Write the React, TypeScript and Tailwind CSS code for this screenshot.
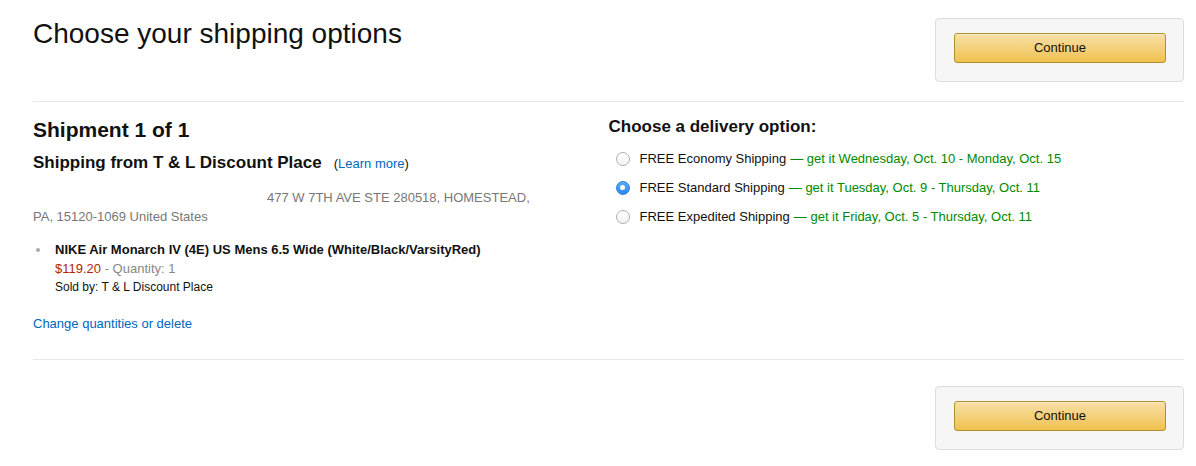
import React from 'react';

const options = [
  { id: 'economy', name: 'FREE Economy Shipping', eta: 'get it Wednesday, Oct. 10 - Monday, Oct. 15', selected: false },
  { id: 'standard', name: 'FREE Standard Shipping', eta: 'get it Tuesday, Oct. 9 - Thursday, Oct. 11', selected: true },
  { id: 'expedited', name: 'FREE Expedited Shipping', eta: 'get it Friday, Oct. 5 - Thursday, Oct. 11', selected: false },
];

function ContinueBox() {
  return (
    <div className="w-[249px] h-[64px] bg-[#f6f6f6] border border-[#dddddd] rounded-[4px] pl-[18px] pr-[17px] pt-[14px]">
      <button className="w-full h-[30px] rounded-[3px] border border-[#b1902f] bg-gradient-to-b from-[#f7dfa5] to-[#f0c14b] text-[13px] text-[#111111] shadow-[inset_0_1px_0_rgba(255,255,255,0.4)]">
        Continue
      </button>
    </div>
  );
}

function Radio({ checked }: { checked: boolean }) {
  if (checked) {
    return (
      <span className="w-[14px] h-[14px] rounded-full bg-gradient-to-b from-[#5aa9fb] to-[#2f87f1] border border-[#2f7fe0] flex items-center justify-center shrink-0">
        <span className="w-[5px] h-[5px] rounded-full bg-white" />
      </span>
    );
  }
  return (
    <span className="w-[14px] h-[14px] rounded-full bg-gradient-to-b from-white to-[#f3f3f3] border border-[#b0b0b0] shrink-0" />
  );
}

export default function App() {
  return (
    <div className="w-[1196px] min-h-[466px] bg-white pl-[33px] pr-[12px] pt-[17px] font-['Liberation_Sans',Arial,sans-serif] text-[#111111]">
      {/* Header */}
      <div className="flex items-start justify-between">
        <h1 className="text-[28px] leading-[34px] font-normal text-[#111111]">Choose your shipping options</h1>
        <div className="mt-[1px]">
          <ContinueBox />
        </div>
      </div>

      <div className="mt-[19px] h-px bg-[#e7e7e7]" />

      {/* Shipment */}
      <div className="grid grid-cols-2">
        <div className="pt-[16px]">
          <h2 className="text-[21px] leading-[24px] font-bold">Shipment 1 of 1</h2>
          <div className="mt-[11px] flex items-baseline">
            <span className="text-[17px] leading-[20px] font-bold">Shipping from T &amp; L Discount Place</span>
            <span className="ml-[12px] text-[13px] text-[#111111]">
              (<a className="text-[#0066c0]">Learn more</a>)
            </span>
          </div>
          <div className="mt-[14px] text-[13px] leading-[19px] text-[#777777]">
            <span className="inline-block w-[234px]" />
            477 W 7TH AVE STE 280518, HOMESTEAD,
            <br />
            PA, 15120-1069 United States
          </div>
          <ul className="mt-[14px] text-[13px]">
            <li className="flex">
              <span className="w-[22px] shrink-0 flex justify-start pl-[3px] pt-[8px]">
                <span className="w-[4px] h-[4px] rounded-full bg-[#aaaaaa]" />
              </span>
              <div>
                <div className="leading-[19px] font-bold text-[#111111]">
                  NIKE Air Monarch IV (4E) US Mens 6.5 Wide (White/Black/VarsityRed)
                </div>
                <div className="leading-[19px]">
                  <span className="text-[#b12704]">$119.20</span>
                  <span className="text-[#888888]"> - Quantity: 1</span>
                </div>
                <div className="leading-[18px] text-[12px] text-[#111111]">Sold by: T &amp; L Discount Place</div>
              </div>
            </li>
          </ul>
          <a className="block mt-[18px] text-[13px] leading-[19px] text-[#0066c0]">Change quantities or delete</a>
        </div>

        <div className="pt-[15px]">
          <h3 className="text-[17px] leading-[20px] font-bold">Choose a delivery option:</h3>
          <div className="mt-[7px]">
            {options.map((opt) => (
              <label key={opt.id} className="flex items-center h-[29px] pl-[7px] text-[13px]">
                <Radio checked={opt.selected} />
                <span className="ml-[10px] text-[#111111]">{opt.name}</span>
                <span className="ml-[4px] text-[#008a00]">&mdash; {opt.eta}</span>
              </label>
            ))}
          </div>
        </div>
      </div>

      <div className="mt-[26px] h-px bg-[#e7e7e7]" />

      {/* Footer */}
      <div className="mt-[26px] flex justify-end pb-[16px]">
        <ContinueBox />
      </div>
    </div>
  );
}
